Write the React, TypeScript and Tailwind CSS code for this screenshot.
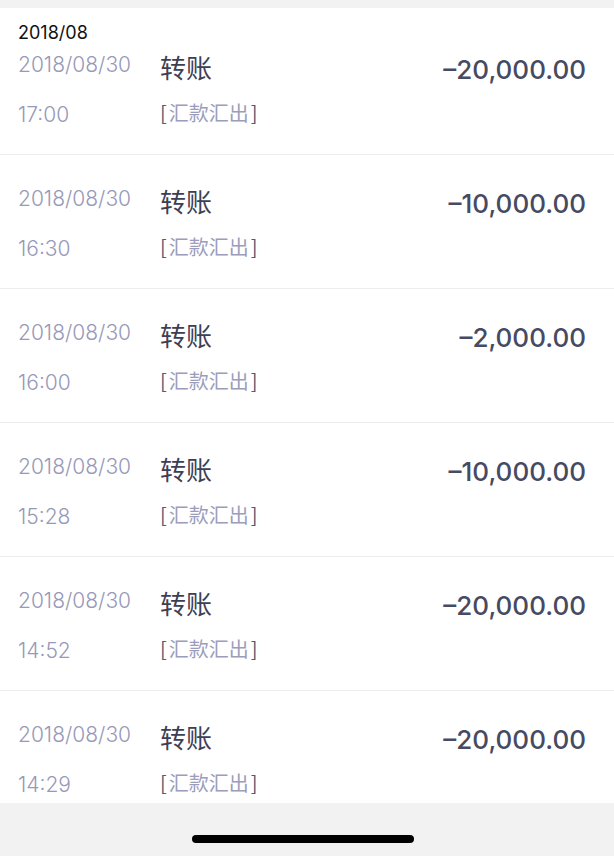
const rows = [
  { date: "2018/08/30", time: "17:00", amount: "–20,000.00" },
  { date: "2018/08/30", time: "16:30", amount: "–10,000.00" },
  { date: "2018/08/30", time: "16:00", amount: "–2,000.00" },
  { date: "2018/08/30", time: "15:28", amount: "–10,000.00" },
  { date: "2018/08/30", time: "14:52", amount: "–20,000.00" },
  { date: "2018/08/30", time: "14:29", amount: "–20,000.00" },
];

const latin = "font-['Inter','Noto_Sans_CJK_SC',sans-serif]";
const cjk = "font-['Noto_Sans_CJK_SC','Inter',sans-serif]";

export default function App() {
  return (
    <div className="w-[614px] h-[856px] bg-[#f2f2f2] flex flex-col overflow-hidden">
      <div className="h-[8px] shrink-0" />

      <div className="relative h-[795px] shrink-0 bg-white overflow-hidden pt-[13px]">
        {rows.map((r, i) => (
          <div key={i} className="h-[134px] border-b border-[#ededed] flex pl-[18px] pr-[28px]">
            <div className={`w-[142px] flex flex-col text-[21px] font-light text-[#9799b8] ${latin}`}>
              <div className="mt-[29px] leading-[30px]">{r.date}</div>
              <div className="mt-[20px] leading-[30px]">{r.time}</div>
            </div>
            <div className={`flex-1 flex flex-col ${cjk}`}>
              <div className="mt-[29px] leading-[34px] text-[26px] text-[#3d4055]">转账</div>
              <div className="mt-[14px] leading-[30px] text-[20px] text-[#9b9dbb]">
                <span className="text-[#585b70] mr-[2px]">[</span>汇款汇出<span className="text-[#585b70] ml-[2px]">]</span>
              </div>
            </div>
            <div className={`mt-[32px] leading-[34px] text-[26px] font-medium text-[#464a62] ${latin}`}>
              {r.amount}
            </div>
          </div>
        ))}

        {/* sticky month header over the list */}
        <div className={`absolute top-0 left-0 right-0 h-[47px] bg-white pl-[18px] pt-[13px] leading-[24px] text-[18px] text-[#111] ${latin}`}>
          2018/08
        </div>
      </div>

      <div className="flex-1 flex">
        <div className="mt-[32px] ml-[192px] w-[222px] h-[8px] rounded-full bg-black" />
      </div>
    </div>
  );
}
